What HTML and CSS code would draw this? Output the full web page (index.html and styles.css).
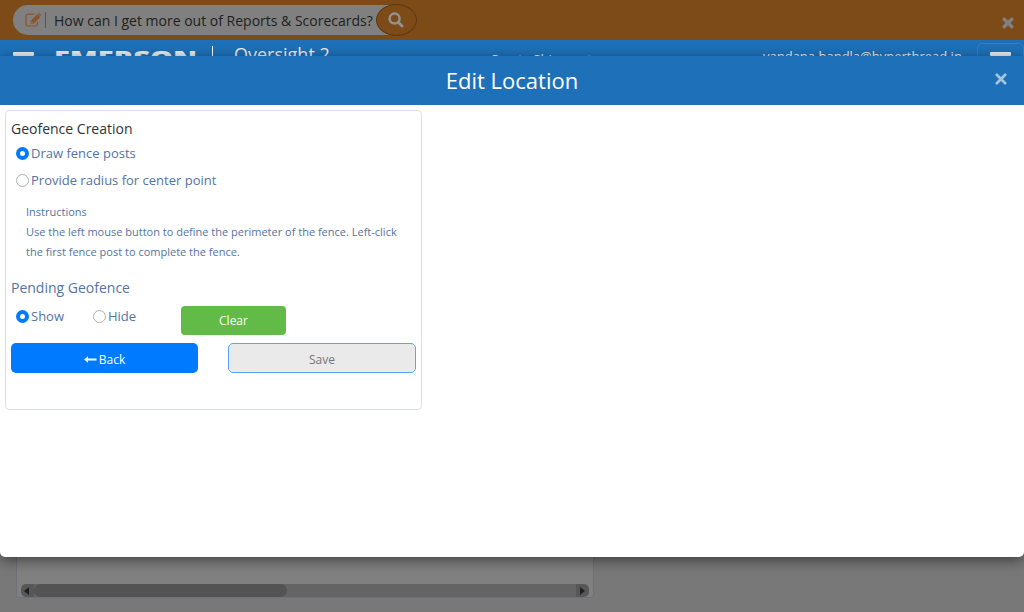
FILE: index.html
```html
<!DOCTYPE html>
<html lang="en">
<head>
<meta charset="utf-8">
<title>Edit Location</title>
<link rel="stylesheet" href="styles.css">
</head>
<body>
<div class="page">
  <div class="helpbar">
    <div class="search">
      <svg class="search-edit" viewBox="0 0 16 14" width="16" height="14"><path d="M9.500 1.200H3.200Q1 1.200 1 3.400V10.800Q1 13 3.200 13H10.300Q12.500 13 12.500 10.800V8.500" fill="none" stroke="currentColor" stroke-width="1.200"/><path fill="currentColor" fill-rule="evenodd" d="M12.300 1.200L5.600 7.900V10.800H8.500L15.200 4.100ZM6.700 8.200L8.200 9.700L7.700 10.100H6.300V8.600ZM12.800.700L13.400.200Q13.900-.200 14.400.300L15.700 1.600Q16.200 2.100 15.700 2.600L15.200 3.200Z"/></svg>
      <span class="search-bar"></span>
      <span class="search-text">How can I get more out of Reports &amp; Scorecards?</span>
      <span class="search-go"><svg viewBox="0 0 16 16" width="16" height="16" fill="none" stroke="currentColor"><circle cx="6.600" cy="6.600" r="5" stroke-width="2.500"/><path d="M10.300 10.300L14 14" stroke-width="2.900" stroke-linecap="round"/></svg></span>
    </div>
    <svg class="help-close" viewBox="0 0 12 12" width="12" height="12"><path d="M2.200 2.200L9.800 9.800M9.800 2.200L2.200 9.800" stroke="currentColor" stroke-width="3.400" stroke-linecap="round"/></svg>
  </div>
  <div class="nav">
    <span class="burger"></span>
    <span class="logo">EMERSON</span>
    <span class="divider"></span>
    <span class="product">Oversight 2</span>
    <span class="nav-title">Create Shipment</span>
    <span class="user">vandana.bandla@hyperthread.in</span>
    <span class="menu-button"><span class="burger"></span></span>
  </div>
  <div class="content">
    <div class="grid-card">
      <div class="scrollbar">
        <span class="arrow"><svg viewBox="0 0 6 8" width="6" height="8"><path d="M5 0V8L0 4Z"/></svg></span>
        <span class="track"><span class="thumb"></span></span>
        <span class="arrow arrow-right"><svg viewBox="0 0 6 8" width="6" height="8"><path d="M1 0V8L6 4Z"/></svg></span>
      </div>
    </div>
  </div>
</div>
<div class="modal">
  <div class="modal-header">
    <h1 class="modal-title">Edit Location</h1>
    <svg class="modal-close" viewBox="0 0 12 12" width="12" height="12"><path d="M1.800 1.800L10.200 10.200M10.200 1.800L1.800 10.200" stroke="currentColor" stroke-width="2.700" stroke-linecap="round"/></svg>
  </div>
  <div class="modal-body">
    <div class="panel">
      <h2 class="heading dark">Geofence Creation</h2>
      <div class="option"><span class="radio on"></span>Draw fence posts</div>
      <div class="option second"><span class="radio"></span>Provide radius for center point</div>
      <div class="instructions">Instructions<br>Use the left mouse button to define the perimeter of the fence. Left-click<br>the first fence post to complete the fence.</div>
      <h2 class="heading">Pending Geofence</h2>
      <div class="pending">
        <div class="option show"><span class="radio on"></span>Show</div>
        <div class="option hide"><span class="radio"></span>Hide</div>
        <div class="button clear">Clear</div>
      </div>
      <div class="actions">
        <div class="button back"><svg viewBox="0 0 13 7" width="13" height="7"><path fill="currentColor" d="M0 3.500L4 .3V2.500H12.500V4.500H4V6.700Z"/></svg>Back</div>
        <div class="button save">Save</div>
      </div>
    </div>
  </div>
</div>
</body>
</html>
```

FILE: styles.css
```css
* { box-sizing: border-box; }
body { margin: 0; font-family: "Open Sans", "Noto Sans", sans-serif; overflow: hidden; }
svg { display: block; flex: none; }
.page { height: 612px; background: #787878; display: flex; flex-direction: column; }

.helpbar { height: 40px; flex: none; background: #7d4b17; display: flex; justify-content: space-between; padding: 5px 10px 0 13px; }
.search { width: 404px; height: 30px; display: flex; align-items: center; background: linear-gradient(90deg, #808080 380px, transparent 380px); border-radius: 15px; padding-left: 12px; }
.search-edit { color: #8f5228; }
.search-bar { width: 1px; height: 16px; margin: 0 8px 0 4px; background: #7d4b17; }
.search-text { width: 322px; padding-top: 2px; font-size: 14px; line-height: 30px; color: #202020; white-space: nowrap; }
.search-go { width: 41px; height: 32px; flex: none; background: #7d4b17; border: 1px solid #5e3810; border-radius: 50%; color: #929292; display: flex; align-items: center; justify-content: center; padding-right: 2px; }
.help-close { margin-top: 12px; color: #808080; }

.nav { height: 60px; flex: none; background: #1e71b9; color: #eee; display: flex; align-items: flex-start; padding-left: 13px; white-space: nowrap; }
.burger { width: 21px; height: 4px; margin-top: 12px; flex: none; background: #eee; border-radius: 1px; }
.logo { width: 157px; margin-right: -1px; padding: 5px 0 0 20px; font-size: 20px; font-weight: 800; line-height: 26px; transform: scaleX(1.445); transform-origin: 20px 0; }
.divider { width: 1px; height: 28px; margin: 6px 21px 0 22px; background: #fff; }
.product { width: 256px; font-size: 18px; line-height: 24px; padding-top: 2px; }
.nav-title { width: 273px; font-size: 13px; line-height: 18px; padding-top: 10px; }
.user { width: 214px; font-size: 13px; line-height: 18px; padding-top: 7px; }
.menu-button { width: 47px; height: 40px; margin-top: 3px; border: 1px solid #3480c1; border-radius: 5px; display: flex; justify-content: center; }
.menu-button .burger { margin-top: 8px; }

.content { flex: 1; padding: 0 0 14px 16px; display: flex; }
.grid-card { width: 578px; border: 1px solid #6d7177; border-radius: 4px; background: #808080; display: flex; align-items: flex-end; padding: 0 4px; }
.scrollbar { width: 568px; height: 13px; display: flex; }
.arrow { width: 13px; flex: none; background: #575757; border-radius: 5px 0 0 5px; display: flex; align-items: center; justify-content: center; padding-right: 2px; fill: #202020; }
.arrow-right { border-radius: 0 5px 5px 0; }
.track { flex: 1; background: #646464; }
.thumb { display: block; width: 253px; height: 13px; background: #535353; border-radius: 7px; }

.modal { position: absolute; top: 56px; left: 0; width: 1024px; height: 501px; background: #fff; border-radius: 0 0 5px 5px; box-shadow: 0 3px 14px rgba(0, 0, 0, .5); }
.modal-header { height: 49px; background: #1e71b9; color: #fff; display: flex; align-items: center; padding: 0 17px 2px 29px; }
.modal-title { flex: 1; margin: 0; text-align: center; font-size: 22px; font-weight: 400; line-height: 30px; }
.modal-close { color: #a5c6e3; margin-top: -2px; }
.modal-body { padding: 5px; }
.panel { width: 417px; height: 300px; border: 1px solid #dadeea; border-radius: 4px; padding: 8px 5px; color: #5474a5; }
.heading { margin: 0; font-size: 14px; font-weight: 400; line-height: 20px; }
.dark { color: #333; }
.option { display: flex; align-items: center; gap: 2px; height: 20px; padding-left: 5px; font-size: 13px; white-space: nowrap; }
.panel > .option { margin-top: 4px; }
.panel > .second { margin-top: 7px; }
.radio { width: 13px; height: 13px; flex: none; border: 1px solid #adb1b7; border-radius: 50%; background: #fff; }
.on { border: 4px solid #007bff; }
.instructions { margin: 12px 0 16px 15px; font-size: 11px; line-height: 20px; white-space: nowrap; }
.pending { display: flex; margin-top: 8px; height: 29px; }
.show { width: 77px; }
.hide { width: 93px; }
.button { display: flex; align-items: center; justify-content: center; font-size: 12px; border-radius: 4px; color: #fff; }
.clear { width: 105px; height: 29px; background: #62bb46; }
.actions { display: flex; gap: 30px; margin-top: 8px; }
.back { width: 187px; height: 30px; background: #007bff; gap: 2px; padding-top: 2px; border-radius: 5px; }
.save { width: 188px; height: 30px; background: #eaeaea; color: #777; border: 1px solid #55a5fa; padding-top: 2px; border-radius: 5px; }
```
